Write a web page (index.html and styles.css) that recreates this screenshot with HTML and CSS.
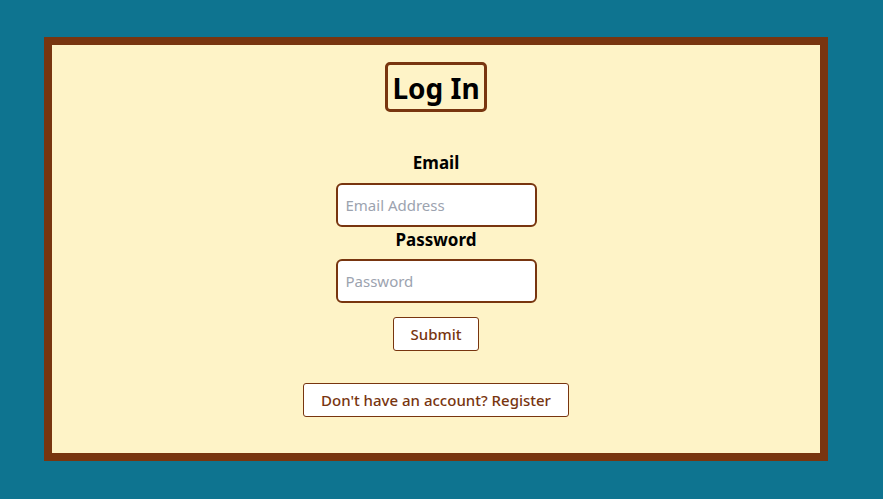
FILE: index.html
```html
<!DOCTYPE html>
<html>
<head>
<meta charset="utf-8">
<link rel="stylesheet" href="styles.css">
</head>
<body>
<main class="card">
  <h1 class="title">Log In</h1>
  <form class="form">
    <label class="label" for="email">Email</label>
    <input class="input" id="email" type="email" placeholder="Email Address">
    <label class="label label-pw" for="pw">Password</label>
    <input class="input" id="pw" type="password" placeholder="Password">
    <button type="button" class="btn btn-submit">Submit</button>
    <button type="button" class="btn btn-register">Don't have an account? Register</button>
  </form>
</main>
</body>
</html>
```
FILE: styles.css
```css
html, body {
  margin: 0;
  padding: 0;
}
body {
  background: #0e7490;
  font-family: "Noto Sans", "Open Sans", sans-serif;
  padding: 37px 0 0 44px;
  height: 499px;
  box-sizing: border-box;
}
.card {
  width: 784px;
  height: 424px;
  box-sizing: border-box;
  background: #fef3c7;
  border: 8px solid #78350f;
  display: flex;
  flex-direction: column;
  align-items: center;
}
.title {
  margin: 17px 0 0;
  border: 3px solid #78350f;
  border-radius: 5px;
  font-size: 28px;
  font-weight: 700;
  line-height: 46px;
  height: 44px;
  padding: 0 4px;
  color: #000;
}
.form {
  margin-top: 39px;
  display: flex;
  flex-direction: column;
  align-items: center;
}
.label {
  font-size: 17px;
  font-weight: 700;
  line-height: 24px;
  height: 24px;
  margin-bottom: 8px;
  color: #000;
}
.label-pw {
  margin-top: 1px;
  margin-bottom: 7px;
}
.input {
  width: 201px;
  height: 44px;
  box-sizing: border-box;
  border: 2px solid #78350f;
  border-radius: 6px;
  background: #fff;
  padding: 0 8px;
  font-family: inherit;
  font-size: 15px;
  outline: none;
}
.input::placeholder {
  color: #9ca3af;
}
.btn {
  background: #fff;
  border: 1px solid #78350f;
  border-radius: 3px;
  color: #78350f;
  font-family: inherit;
  font-size: 15px;
  font-weight: 500;
  height: 34px;
  box-sizing: border-box;
  padding: 0;
}
.btn-submit {
  margin-top: 14px;
  width: 86px;
}
.btn-register {
  margin-top: 32px;
  width: 266px;
}
```
